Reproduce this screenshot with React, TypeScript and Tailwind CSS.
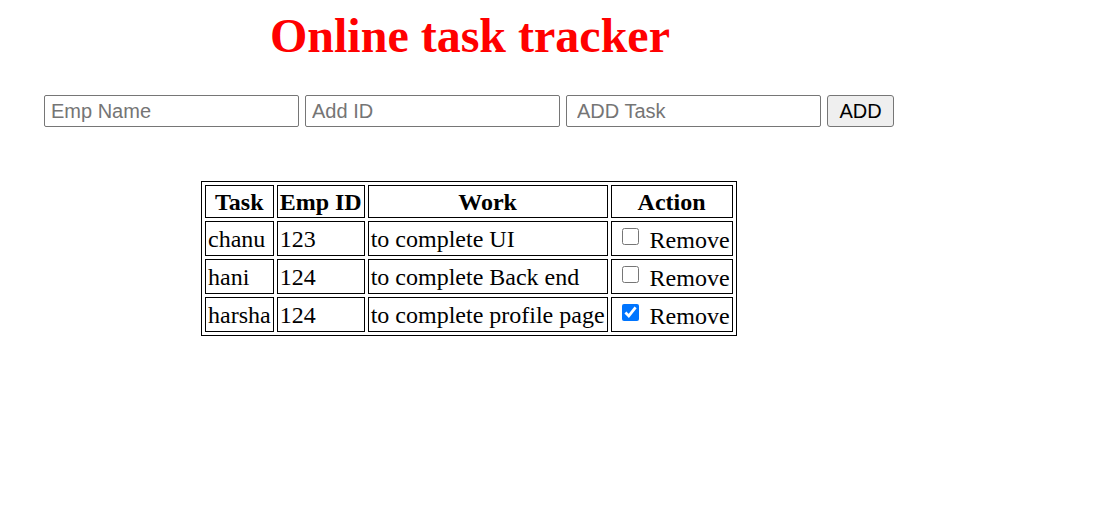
import { useState } from "react";

type Task = { name: string; id: string; work: string; done: boolean };

const initial: Task[] = [
  { name: "chanu", id: "123", work: "to complete UI", done: false },
  { name: "hani", id: "124", work: "to complete Back end", done: false },
  { name: "harsha", id: "124", work: "to complete profile page", done: true },
];

export default function App() {
  const [tasks, setTasks] = useState(initial);

  const toggle = (i: number) =>
    setTasks(tasks.map((t, j) => (j === i ? { ...t, done: !t.done } : t)));

  const cell = "border border-black px-[2px] py-0";

  return (
    <div className="min-h-screen bg-white text-black font-['Liberation_Serif',serif]">
      <h1 className="pl-[270px] pt-[6px] text-[48px] font-bold leading-[60px] text-[#ff0000]">
        Online task tracker
      </h1>

      <div className="flex gap-[6px] pl-[44px] pt-[29px] font-['Liberation_Sans',Arial,sans-serif]">
        <input
          placeholder="Emp Name"
          className="w-[255px] h-[32px] border border-[#767676] rounded-[2px] px-[6px] text-[20px] placeholder:text-[#757575] outline-none"
        />
        <input
          placeholder="Add ID"
          className="w-[255px] h-[32px] border border-[#767676] rounded-[2px] px-[6px] text-[20px] placeholder:text-[#757575] outline-none"
        />
        <input
          placeholder="ADD Task"
          className="w-[255px] h-[32px] border border-[#767676] rounded-[2px] px-[10px] text-[20px] placeholder:text-[#757575] outline-none"
        />
        <button className="w-[67px] h-[32px] border border-[#767676] rounded-[3px] bg-[#efefef] text-[20px]">
          ADD
        </button>
      </div>

      <div className="pl-[201px] pt-[54px]">
        <table className="border-separate border-spacing-[3px] border border-black text-[24px] leading-[28px]">
          <thead>
            <tr className="font-bold">
              <th className={`${cell} h-[33px]`}>Task</th>
              <th className={cell}>Emp ID</th>
              <th className={cell}>Work</th>
              <th className={cell}>Action</th>
            </tr>
          </thead>
          <tbody>
            {tasks.map((t, i) => (
              <tr key={i}>
                <td className={`${cell} h-[35px]`}>{t.name}</td>
                <td className={cell}>{t.id}</td>
                <td className={cell}>{t.work}</td>
                <td className={cell}>
                  <label className="flex items-center">
                    <input
                      type="checkbox"
                      checked={t.done}
                      onChange={() => toggle(i)}
                      className="w-[17px] h-[17px] ml-[8px] mr-[11px] mb-[4px] accent-[#0075ff]"
                    />
                    <span className="mt-[3px]">Remove</span>
                  </label>
                </td>
              </tr>
            ))}
          </tbody>
        </table>
      </div>
    </div>
  );
}
